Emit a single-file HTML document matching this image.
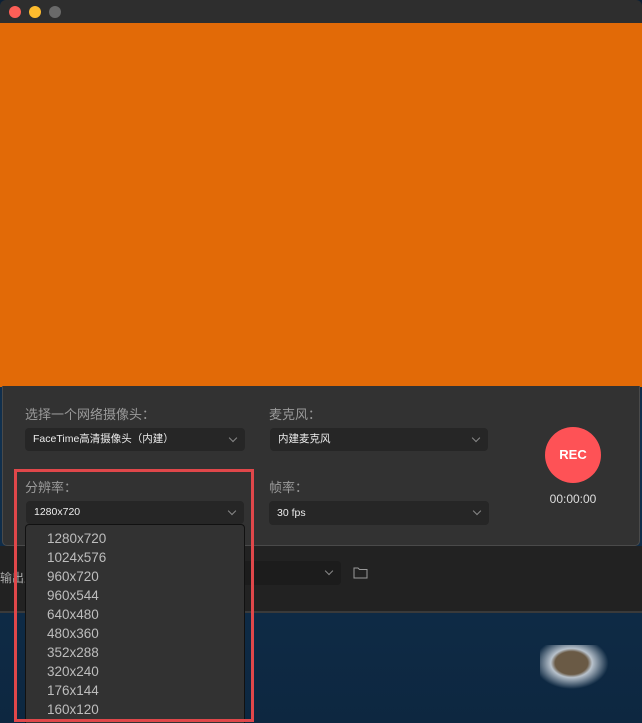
<!DOCTYPE html><html><head><meta charset="utf-8"><style>
*{margin:0;padding:0;box-sizing:border-box}
body{width:642px;height:723px;overflow:hidden;position:relative;background:linear-gradient(180deg,#0c2036,#10304e 60%,#0d2740);font-family:"Liberation Sans","Noto Sans CJK SC",sans-serif}
.a{position:absolute}
.tb{left:0;top:0;width:642px;height:23px;background:#2e2e2e;border-radius:6px 6px 0 0}
.dot{top:6px;width:12px;height:12px;border-radius:50%}
.lbl{color:#9a9a9a;font-size:13px}
.sel{background:#262626;border-radius:4px;color:#ececec;font-size:10.5px;padding-left:8px;line-height:22px}
.chev{position:absolute;right:9px;top:7px;width:6px;height:6px;border-right:1px solid #888;border-bottom:1px solid #888;transform:rotate(45deg)}
.mi{color:#bdbdbd;font-size:13.5px;height:19px;line-height:19px;padding-left:21px}
</style></head><body>
<div class="a" style="left:0;top:546px;width:642px;height:66px;background:#222"></div>
<div class="a" style="left:0;top:611px;width:642px;height:2px;background:#3a3a3a"></div>
<div class="a" style="left:0;top:569px;color:#aaa;font-size:12px">输出路</div>
<div class="a sel" style="left:200px;top:561px;width:141px;height:24px;background:#1c1c1c"><div class="chev"></div></div>
<svg class="a" style="left:353px;top:566px" width="15" height="13"><path d="M1 2h4l1.5 1.5H14V12H1Z" fill="none" stroke="#999" stroke-width="1"/></svg>
<div class="a" style="left:540px;top:645px;width:70px;height:45px;background:radial-gradient(ellipse at 45% 40%,#6a5a45 0 30%,#b8c2cc 38%,transparent 68%)"></div>
<div class="a tb"></div>
<div class="a dot" style="left:9px;background:#fe5f57"></div>
<div class="a dot" style="left:29px;background:#febc2e"></div>
<div class="a dot" style="left:49px;background:#6a6a6a"></div>
<div class="a" style="left:0;top:23px;width:642px;height:364px;background:#e26a07"></div>
<div class="a" style="left:2px;top:386px;width:638px;height:160px;background:#323232;border:1px solid #4a4a4a;border-top:none;border-radius:0 0 5px 5px"></div>
<div class="a lbl" style="left:25px;top:404px">选择一个网络摄像头：</div>
<div class="a sel" style="left:25px;top:428px;width:220px;height:23px">FaceTime高清摄像头（内建）<div class="chev"></div></div>
<div class="a lbl" style="left:269px;top:404px">麦克风：</div>
<div class="a sel" style="left:270px;top:428px;width:218px;height:23px">内建麦克风<div class="chev"></div></div>
<div class="a lbl" style="left:25px;top:477px">分辨率：</div>
<div class="a sel" style="left:26px;top:501px;width:218px;height:23px">1280x720<div class="chev"></div></div>
<div class="a lbl" style="left:269px;top:477px">帧率：</div>
<div class="a sel" style="left:269px;top:501px;width:220px;height:24px;line-height:24px">30 fps<div class="chev"></div></div>
<div class="a" style="left:545px;top:427px;width:56px;height:56px;border-radius:50%;background:#fe5256;color:#fff;font-size:13px;font-weight:bold;text-align:center;line-height:56px">REC</div>
<div class="a" style="left:540px;top:492px;width:66px;text-align:center;color:#ddd;font-size:12px">00:00:00</div>
<div class="a" style="left:25px;top:524px;width:220px;height:199px;background:#323232;border:1px solid #111;border-bottom:none;border-radius:4px 4px 0 0;padding-top:4px">
<div class="mi">1280x720</div><div class="mi">1024x576</div><div class="mi">960x720</div><div class="mi">960x544</div><div class="mi">640x480</div><div class="mi">480x360</div><div class="mi">352x288</div><div class="mi">320x240</div><div class="mi">176x144</div><div class="mi">160x120</div></div>
<div class="a" style="left:14px;top:469px;width:240px;height:253px;border:3px solid #e0474a"></div>
</body></html>
